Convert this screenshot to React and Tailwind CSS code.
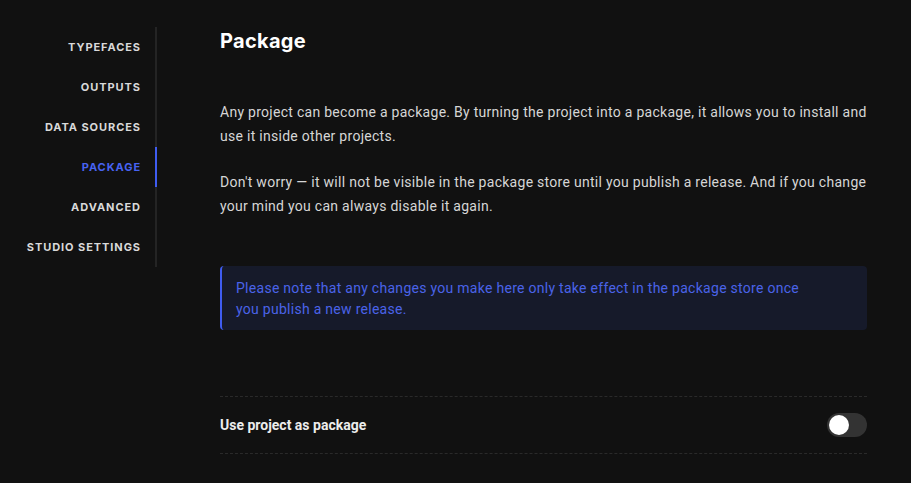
import { useState } from "react";

const navItems = [
  "Typefaces",
  "Outputs",
  "Data sources",
  "Package",
  "Advanced",
  "Studio settings",
];

export default function App() {
  const [active, setActive] = useState("Package");
  const [enabled, setEnabled] = useState(false);

  return (
    <div className="min-h-screen w-full bg-[#111111] flex font-['Roboto',sans-serif]">
      {/* Sidebar */}
      <div className="w-[157px] shrink-0 pt-[27px]">
        <nav className="flex flex-col border-r-2 border-[#242424]">
          {navItems.map((item) => (
            <button
              key={item}
              onClick={() => setActive(item)}
              className={`h-10 flex items-center justify-end pr-[14px] -mr-[2px] border-r-2 font-['Inter',sans-serif] text-[11px] font-bold uppercase tracking-[0.085em] ${
                active === item
                  ? "border-[#3f5cf0] text-[#4763f2]"
                  : "border-transparent text-[#d9d9d9]"
              }`}
            >
              {item}
            </button>
          ))}
        </nav>
      </div>

      {/* Main */}
      <div className="flex-1 pl-[63px] pr-[44px] pt-[27px]">
        <h1 className="font-['Inter',sans-serif] text-[20px] leading-7 font-bold tracking-[0.015em] text-white">
          Package
        </h1>

        <div className="mt-[45px] text-[14px] leading-6 text-[#d6d6d6] tracking-[0.02em]">
          <p>
            Any project can become a package. By turning the project into a
            package, it allows you to install and use it inside other projects.
          </p>
          <p className="mt-[22px]">
            Don't worry — it will not be visible in the package store until you
            publish a release. And if you change your mind you can always
            disable it again.
          </p>
        </div>

        <div className="mt-12 rounded border-l-2 border-[#3f5cf0] bg-[#161a2a] pl-[14px] pr-4 pt-3 pb-[10px]">
          <p className="max-w-[575px] text-[14px] leading-[21px] text-[#4a63e8] tracking-[0.02em]">
            Please note that any changes you make here only take effect in the
            package store once you publish a new release.
          </p>
        </div>

        <div className="mt-[66px] h-[58px] flex items-center justify-between border-y border-dashed border-[#2a2a2a]">
          <span className="text-[14px] font-bold text-[#ececec]">
            Use project as package
          </span>
          <button
            onClick={() => setEnabled(!enabled)}
            className={`w-10 h-6 rounded-full p-[2px] flex items-center ${
              enabled ? "bg-[#3f5cf0] justify-end" : "bg-[#333333] justify-start"
            }`}
          >
            <span className="w-5 h-5 rounded-full bg-white" />
          </button>
        </div>
      </div>
    </div>
  );
}
